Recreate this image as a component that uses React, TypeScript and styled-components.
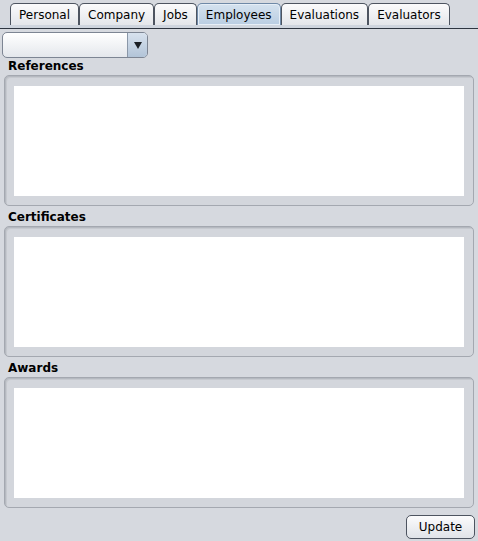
import styled, { createGlobalStyle } from 'styled-components';

const GlobalStyle = createGlobalStyle`
  html, body {
    margin: 0;
    padding: 0;
    background: #d6d9df;
  }
  body {
    font-family: "DejaVu Sans", "Liberation Sans", sans-serif;
    font-size: 12px;
    color: #000;
  }
`;

const Frame = styled.div`
  width: 478px;
  height: 541px;
  background: #d6d9df;
  display: flex;
  flex-direction: column;
  overflow: hidden;
`;

const TabStrip = styled.div`
  display: flex;
  align-items: flex-end;
  height: 28px;
  padding-left: 10px;
  padding-top: 3px;
  box-sizing: border-box;
  border-bottom: 3px solid #cfd5de;
`;

const TabLine = styled.div`
  height: 1px;
  background: #2e3540;
`;

const Tab = styled.div<{ $active?: boolean }>`
  height: 22px;
  box-sizing: border-box;
  padding: 0 8px;
  display: flex;
  align-items: center;
  border: 1px solid ${p => (p.$active ? '#6f89a7' : '#4d5460')};
  border-bottom: none;
  border-radius: 5px 5px 0 0;
  background: ${p =>
    p.$active
      ? 'linear-gradient(#d5e2ef, #b9cde2)'
      : 'linear-gradient(#fbfbfc, #e4e6ea)'};
  box-shadow: ${p => (p.$active ? 'inset 0 0 0 1px #e6eef7' : 'none')};
  white-space: nowrap;
`;

const Body = styled.div`
  flex: 1;
  display: flex;
  flex-direction: column;
  padding: 3px 4px 0 2px;
`;

const Combo = styled.div`
  width: 146px;
  height: 26px;
  box-sizing: border-box;
  border: 1px solid #7d8593;
  border-radius: 5px;
  display: flex;
  overflow: hidden;
  background: linear-gradient(#ffffff, #e4e7ec);
`;

const ComboField = styled.div`
  flex: 1;
`;

const ComboButton = styled.div`
  width: 19px;
  border-left: 1px solid #8a97a8;
  background: linear-gradient(#d8e2ee, #b2c4d8);
  display: flex;
  align-items: center;
  justify-content: center;
`;

const Arrow = styled.div`
  width: 0;
  height: 0;
  border-left: 4px solid transparent;
  border-right: 4px solid transparent;
  border-top: 7px solid #1a1e24;
`;

const SectionLabel = styled.div<{ $first?: boolean }>`
  font-weight: bold;
  height: ${p => (p.$first ? 17 : 20)}px;
  box-sizing: border-box;
  padding-top: ${p => (p.$first ? 0 : 3)}px;
  line-height: 17px;
  padding-left: 6px;
`;

const Section = styled.div`
  display: flex;
  flex-direction: column;
`;

const ScrollBox = styled.div`
  margin-left: 2px;
  height: 131px;
  box-sizing: border-box;
  border: 1px solid #a4a8b0;
  border-radius: 5px;
  padding: 10px 9px 9px 9px;
  background: #d3d6dc;
  box-shadow: inset 1px 1px 0 #b5b9c0, inset 2px 2px 0 #c6c9cf;
`;

const WhiteArea = styled.div`
  height: 100%;
  background: #ffffff;
`;

const Footer = styled.div`
  display: flex;
  justify-content: flex-end;
  padding-top: 7px;
`;

const Button = styled.div`
  width: 69px;
  height: 24px;
  box-sizing: border-box;
  border: 1px solid #4d5460;
  border-radius: 5px;
  background: linear-gradient(#fbfbfc, #e0e3e8);
  display: flex;
  align-items: center;
  justify-content: center;
  margin-right: -1px;
`;

const tabs = ['Personal', 'Company', 'Jobs', 'Employees', 'Evaluations', 'Evaluators'];
const sections = ['References', 'Certificates', 'Awards'];

export default function App() {
  return (
    <Frame>
      <GlobalStyle />
      <TabStrip>
        {tabs.map(t => (
          <Tab key={t} $active={t === 'Employees'}>
            {t}
          </Tab>
        ))}
      </TabStrip>
      <TabLine />
      <Body>
        <Combo>
          <ComboField />
          <ComboButton>
            <Arrow />
          </ComboButton>
        </Combo>
        {sections.map((s, i) => (
          <Section key={s}>
            <SectionLabel $first={i === 0}>{s}</SectionLabel>
            <ScrollBox>
              <WhiteArea />
            </ScrollBox>
          </Section>
        ))}
        <Footer>
          <Button>Update</Button>
        </Footer>
      </Body>
    </Frame>
  );
}
